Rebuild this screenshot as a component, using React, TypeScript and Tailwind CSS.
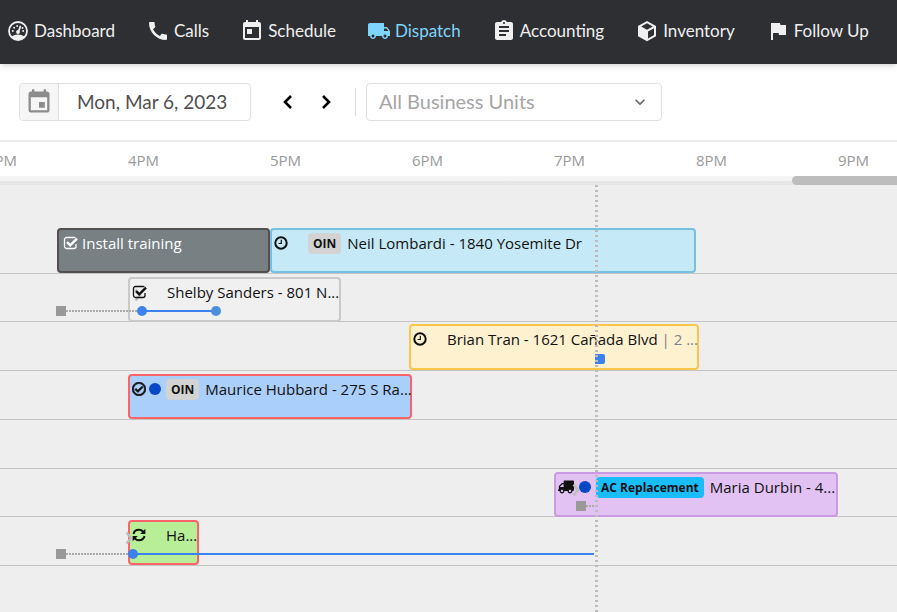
import type { ReactNode } from 'react';
import { clsx } from 'clsx';
import { FaRegCheckCircle, FaTruck } from 'react-icons/fa';
import { MdAssignment, MdCall, MdEvent, MdFlag, MdKeyboardArrowDown, MdLocalShipping, MdToday } from 'react-icons/md';

const GaugeIcon = () => (
  <svg viewBox="0 0 24 24" className="size-6" fill="none" stroke="currentColor" strokeWidth="1.800">
    <circle cx="12" cy="12" r="9" />
    <path d="M5.5 17.6c2-1.4 4.200-2.100 6.500-2.100s4.500.7 6.500 2.100C17 19.800 14.700 21 12 21s-5-1.200-6.500-3.400z" fill="currentColor" stroke="none" />
    <path d="M12.300 13.300 14.300 7.500" strokeLinecap="round" />
    <circle cx="12" cy="13" r="1.900" fill="currentColor" stroke="none" />
    <g fill="currentColor" stroke="none">
      <circle cx="6.800" cy="12" r="1" />
      <circle cx="8.200" cy="8.700" r="1" />
      <circle cx="11.200" cy="7" r="1" />
      <circle cx="16.500" cy="9" r="1" />
      <circle cx="17.200" cy="12" r="1" />
    </g>
  </svg>
);

const BoxIcon = () => (
  <svg viewBox="0 0 24 24" className="size-6" fill="currentColor">
    <path
      fillRule="evenodd"
      d="M12 2l9 5v10.200L12 22.200 3 17.200V7zM12 4.300 6.200 7.500 12 10.700l5.800-3.200zM13 12.500v6.900l6-3.400V9.200z"
    />
  </svg>
);

const ArrowIcon = ({ d }: { d: string }) => (
  <svg viewBox="0 0 14 14" className="size-3.5" fill="none" stroke="currentColor" strokeWidth="2.600">
    <path d={d} />
  </svg>
);

const CheckSquareIcon = () => (
  <svg viewBox="0 0 16 16" className="relative size-4" fill="none" stroke="currentColor">
    <path d="M13 9v2.500a2 2 0 0 1-2 2H3.500a2 2 0 0 1-2-2v-7a2 2 0 0 1 2-2H11c.5 0 1 .1 1.300.4" strokeWidth="1.300" />
    <path d="M4 7.200 7.200 10.400 14 3.600" strokeWidth="2.400" />
  </svg>
);

const ClockIcon = () => (
  <svg viewBox="0 0 14 14" className="size-3.5" fill="none" stroke="currentColor">
    <circle cx="7" cy="7" r="5.700" strokeWidth="2" />
    <path d="M7.300 3.800v3.700H4.600" strokeWidth="1.200" />
  </svg>
);

const RefreshIcon = () => (
  <svg viewBox="0 0 14 14" className="size-3.5" fill="none" stroke="currentColor" strokeWidth="2">
    <path d="M1.500 6C2 3.500 4.200 1.800 7 1.800c1.700 0 3.200.7 4.200 1.900M12.500 8c-.5 2.500-2.700 4.200-5.500 4.200-1.700 0-3.200-.7-4.200-1.900" />
    <path d="M13.400.800v5.200H8.200zM.600 13.200V8h5.200z" fill="currentColor" stroke="none" />
  </svg>
);

const GreyChevron = ({ className }: { className: string }) => (
  <svg viewBox="0 0 8 14" className={clsx('absolute h-3.5 w-2', className)} fill="none" stroke="#bdbdbd" strokeWidth="2.500">
    <path d="M1.500 1.500 6 7l-4.500 5.500" />
  </svg>
);

const navItems = [
  { label: 'Dashboard', icon: <GaugeIcon /> },
  { label: 'Calls', icon: <MdCall size={24} /> },
  { label: 'Schedule', icon: <MdToday size={24} /> },
  { label: 'Dispatch', icon: <MdLocalShipping size={24} />, active: true },
  { label: 'Accounting', icon: <MdAssignment size={24} /> },
  { label: 'Inventory', icon: <BoxIcon /> },
  { label: 'Follow Up', icon: <MdFlag size={24} /> },
];

const hours = ['3PM', '4PM', '5PM', '6PM', '7PM', '8PM', '9PM'];

function NavBar() {
  return (
    <nav className="relative z-10 flex h-16 items-center gap-[31px] bg-[#2e2f33] px-1.5 pb-0.5 font-['Lato',sans-serif] text-[17px] shadow-md">
      {navItems.map((item) => (
        <a
          key={item.label}
          href="#"
          className={clsx('flex items-center gap-1 whitespace-nowrap', item.active ? 'text-[#7fd4fb]' : 'text-[#efefef]')}
        >
          {item.icon}
          {item.label}
        </a>
      ))}
    </nav>
  );
}

function Toolbar() {
  return (
    <div className="flex items-center border-b-2 border-[#ebebeb] px-[19px] py-[19px] font-['Lato',sans-serif]">
      <div className="flex h-[38px] w-[232px] overflow-hidden rounded border border-[#e0e0e0]">
        <button type="button" aria-label="Open calendar" className="flex w-[39px] shrink-0 items-center justify-center border-r border-[#e0e0e0] bg-[#f6f6f6] text-[#8c8c8c]">
          <MdEvent size={28} />
        </button>
        <input aria-label="Date" defaultValue="Mon, Mar 6, 2023" className="w-full min-w-0 pl-[18px] text-[19px] text-[#505050] outline-none" />
      </div>
      <button type="button" aria-label="Previous day" className="ml-[18px] flex w-[38px] justify-center">
        <ArrowIcon d="M10 1 4 7l6 6" />
      </button>
      <button type="button" aria-label="Next day" className="flex w-[38px] justify-center">
        <ArrowIcon d="M4 1l6 6-6 6" />
      </button>
      <div className="ml-2.5 h-7 w-px bg-[#dcdcdc]" />
      <div className="ml-2.5 grid w-[296px] items-center">
        <select
          aria-label="Business unit"
          className="col-start-1 row-start-1 h-[38px] appearance-none rounded border border-[#e0e0e0] bg-white pb-0.5 pl-3 text-xl text-[#a5a5a5]"
        >
          <option>All Business Units</option>
        </select>
        <MdKeyboardArrowDown size={20} className="pointer-events-none col-start-1 row-start-1 mr-3 justify-self-end text-[#666]" />
      </div>
    </div>
  );
}

type JobProps = {
  className: string;
  icon: ReactNode;
  dot?: boolean;
  selected?: boolean;
  tag?: string;
  tagClass?: string;
  children: ReactNode;
};

function Job({ className, icon, dot, selected, tag, tagClass = 'bg-[#d3d3d3]', children }: JobProps) {
  return (
    <article
      className={clsx(
        'flex items-start rounded border-2 pt-[3px] pl-0.5 whitespace-nowrap text-[#111]',
        selected ? '-mx-[3px] mt-0.5 h-[46px]' : 'mt-[3px] h-[45px]',
        className,
      )}
    >
      <span className="flex h-5 items-center">{icon}</span>
      <span className={clsx('mt-1 mr-[5px] ml-[3px] size-3 shrink-0 rounded-full', dot && 'bg-[#0748c4]')} />
      {tag && <span className={clsx('mr-1.5 rounded px-[5px] pt-px text-xs leading-5 font-bold', tagClass)}>{tag}</span>}
      <span className="leading-5">{children}</span>
    </article>
  );
}

const Row = ({ children }: { children?: ReactNode }) => (
  <div className="relative -ml-3.5 grid grid-cols-[repeat(13,71px)] border-b border-[#c4c4c4]">
    {children}
  </div>
);

const Square = ({ className }: { className: string }) => <i className={clsx('absolute size-2.5 bg-[#999]', className)} />;
const Dot = ({ className }: { className: string }) => <i className={clsx('absolute size-2.5 rounded-full', className)} />;
const Dotted = ({ className }: { className: string }) => (
  <i className={clsx('absolute h-0.5 bg-[repeating-linear-gradient(90deg,#aaa_0_2px,transparent_2px_3px)]', className)} />
);

function Board() {
  return (
    <main className="relative flex-1 overflow-hidden bg-[#eeeeee] pt-10 text-[15px]">
      <div className="grid h-[341px] auto-rows-fr">
        <Row>
          <article className="col-span-3 col-start-2 mt-[3px] flex h-[45px] items-start gap-[3px] rounded border-2 border-[#505050] bg-[#788084] pt-[3px] pl-1 leading-5 text-white">
            <span className="flex h-5 items-center">
              <CheckSquareIcon />
            </span>
            Install training
          </article>
          <Job className="col-span-6 border-[#77c1de] bg-[#c5e9f7]" icon={<ClockIcon />} tag="OIN">
            Neil Lombardi - 1840 Yosemite Dr
          </Job>
        </Row>
        <Row>
          <Job
            className="col-span-3 col-start-3 border-[#c9c9c9] bg-[#f0f0f0]"
            icon={
              <span className="relative w-[15px]">
                <GreyChevron className="top-1 left-0.5" />
                <CheckSquareIcon />
              </span>
            }
          >
            Shelby Sanders - 801 N...
          </Job>
          <Square className="top-8 left-[70px]" />
          <Dotted className="top-9 left-20 w-[71px]" />
          <i className="absolute top-9 left-[156px] h-0.5 w-[74px] bg-[#3b82ee]" />
          <Dot className="top-8 left-[151px] bg-[#3b82ee]" />
          <Dot className="top-8 left-[225px] bg-[#4d8fdd]" />
        </Row>
        <Row>
          <Job className="col-span-4 col-start-7 border-[#fbc64a] bg-[#fef1d0]" icon={<ClockIcon />} selected>
            Brian Tran - 1621 Cañada Blvd <span className="text-[#7c8288]">| 2 ...</span>
          </Job>
          <i className="absolute top-8 left-[609px] size-2.5 rounded-r-xs bg-[#3b82ee]" />
        </Row>
        <Row>
          <Job className="col-span-4 col-start-3 border-[#fa6469] bg-[#abcffb]" icon={<FaRegCheckCircle size={14} stroke="currentColor" strokeWidth={30} />} dot tag="OIN">
            Maurice Hubbard - 275 S Ra...
          </Job>
        </Row>
        <Row />
        <Row>
          <Job
            className="col-span-4 col-start-9 border-[#c99be3] bg-[#e2c2f3]"
            icon={
              <span className="relative w-[18px]">
                <FaTruck size={16} className="-scale-x-100" />
                <GreyChevron className="top-1 left-3.5" />
              </span>
            }
            dot
            tag="AC Replacement"
            tagClass="bg-[#19bdfa]"
          >
            Maria Durbin - 4...
          </Job>
          <Square className="top-8 left-[590px]" />
          <Dotted className="top-9 left-[600px] w-2.5" />
        </Row>
        <Row>
          <GreyChevron className="top-3.5 left-[139px]" />
          <Job className="col-start-3 border-[#fa6469] bg-[#b9ee98]" icon={<RefreshIcon />}>
            Ha...
          </Job>
          <Square className="top-8 left-[70px]" />
          <Dotted className="top-9 left-20 w-[62px]" />
          <i className="absolute top-9 left-[147px] h-0.5 w-[461px] bg-[#3b82ee]" />
          <Dot className="top-8 left-[142px] bg-[#3b82ee]" />
        </Row>
      </div>
      {/* current time */}
      <div className="absolute top-0 bottom-0 left-[595px] w-[3px] bg-[repeating-linear-gradient(#bcbcbc_0_2px,transparent_2px_5px)]" />
    </main>
  );
}

export default function App() {
  return (
    <div className="flex min-h-screen flex-col overflow-hidden bg-white font-['Open_Sans',sans-serif]">
      <NavBar />
      <Toolbar />
      <div className="-ml-3.5 grid h-[34px] grid-cols-[repeat(7,142px)] items-center pt-0.5 text-[15px] text-[#999]">
        {hours.map((hour) => (
          <span key={hour}>{hour}</span>
        ))}
      </div>
      <div className="flex h-[9px] justify-end bg-linear-to-b from-[#f5f5f5] from-60% to-[#e6e6e6] to-60%">
        <div className="w-[105px] rounded-l-full bg-[#bdbdbd]" />
      </div>
      <Board />
    </div>
  );
}
